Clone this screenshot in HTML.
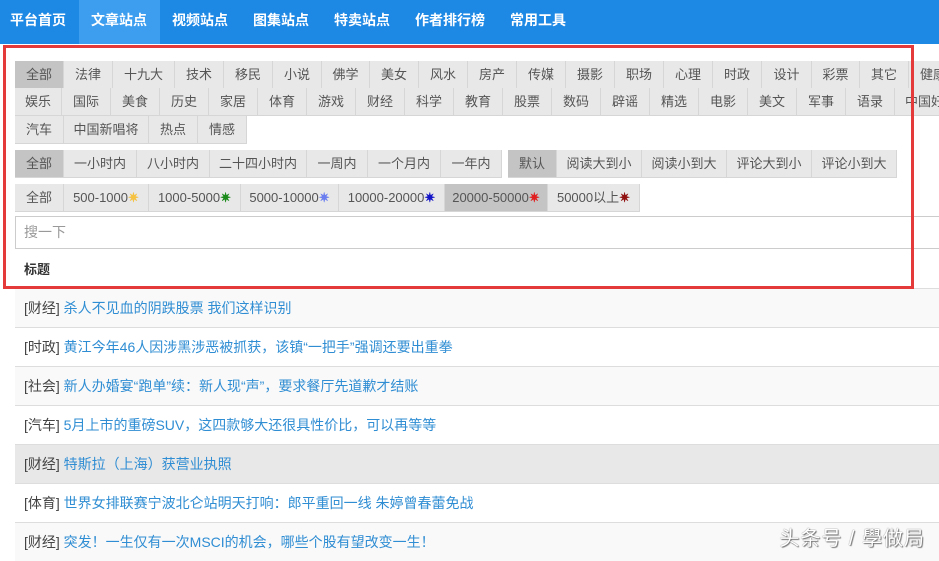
<!DOCTYPE html>
<html><head><meta charset="utf-8"><style>
*{box-sizing:border-box;margin:0;padding:0}
body{width:939px;height:553px;overflow:hidden;background:#fff;font-family:"Liberation Sans","Noto Sans CJK SC",sans-serif;font-size:13px;color:#333;position:relative}
.nav{position:absolute;left:0;top:0;width:939px;height:44px;background:#1e88e5;display:flex}
.nav div{color:#fff;font-size:14px;font-weight:bold;line-height:40px;padding:0 12.5px}
.nav div:first-child{padding-left:10px}
.nav div.on{background:#3d9ef0}
.row{position:absolute;left:15px;display:flex;white-space:nowrap}
.row span{display:block;height:28px;line-height:27px;background:#e8e8e8;border-right:1px solid #d6d6d6;border-bottom:1px solid #d6d6d6;color:#555;text-align:center;font-size:13px}
.row span.on{background:#c4c4c4}
.red{position:absolute;left:3px;top:45px;width:911px;height:244px;border:3px solid #e53a3a;z-index:5}
.search{position:absolute;left:15px;top:216px;width:924px;height:33px;border:1px solid #ccc;border-right:none;color:#999;font-size:14px;line-height:31px;padding-left:8px}
.hd{position:absolute;left:24px;top:259px;font-weight:bold;font-size:13px;color:#333}
.li{position:absolute;left:15px;width:924px;height:39px;border-top:1px solid #ddd;line-height:38px;padding-left:9px;font-size:14px;color:#444}
.li a{color:#2f8dd3;text-decoration:none}
.wm{position:absolute;right:14px;top:522px;font-size:20px;color:#fff;text-shadow:0 0 1px #555,1px 1px 1px #777;letter-spacing:1px}
</style></head><body>
<div class="nav"><div>平台首页</div><div class="on">文章站点</div><div>视频站点</div><div>图集站点</div><div>特卖站点</div><div>作者排行榜</div><div>常用工具</div></div>
<div class="red"></div>
<div class="row" style="top:61px"><span class="on" style="width:49px">全部</span><span style="width:49px">法律</span><span style="width:62px">十九大</span><span style="width:49px">技术</span><span style="width:49px">移民</span><span style="width:49px">小说</span><span style="width:48px">佛学</span><span style="width:49px">美女</span><span style="width:49px">风水</span><span style="width:49px">房产</span><span style="width:49px">传媒</span><span style="width:49px">摄影</span><span style="width:49px">职场</span><span style="width:49px">心理</span><span style="width:49px">时政</span><span style="width:50px">设计</span><span style="width:48px">彩票</span><span style="width:49px">其它</span><span style="width:49px">健康</span></div>
<div class="row" style="top:88px"><span style="width:47px">娱乐</span><span style="width:49px">国际</span><span style="width:49px">美食</span><span style="width:49px">历史</span><span style="width:49px">家居</span><span style="width:49px">体育</span><span style="width:49px">游戏</span><span style="width:49px">财经</span><span style="width:49px">科学</span><span style="width:49px">教育</span><span style="width:49px">股票</span><span style="width:49px">数码</span><span style="width:49px">辟谣</span><span style="width:49px">精选</span><span style="width:49px">电影</span><span style="width:49px">美文</span><span style="width:49px">军事</span><span style="width:49px">语录</span><span style="width:60px">中国好</span></div>
<div class="row" style="top:116px"><span style="width:49px">汽车</span><span style="width:85px">中国新唱将</span><span style="width:49px">热点</span><span style="width:49px">情感</span></div>
<div class="row" style="top:150px"><span class="on" style="width:49px">全部</span><span style="width:73px">一小时内</span><span style="width:73px">八小时内</span><span style="width:97px">二十四小时内</span><span style="width:61px">一周内</span><span style="width:73px">一个月内</span><span style="width:61px">一年内</span><span style="width:6px;background:#fff;border:none"></span><span class="on" style="width:49px">默认</span><span style="width:85px">阅读大到小</span><span style="width:85px">阅读小到大</span><span style="width:85px">评论大到小</span><span style="width:85px">评论小到大</span></div>
<div class="row" style="top:184px"><span style="width:49px">全部</span><span style="width:85px">500-1000<b style="color:#f5c242">✷</b></span><span style="width:92px">1000-5000<b style="color:#1a8a1a">✷</b></span><span style="width:98px">5000-10000<b style="color:#6a7ef0">✷</b></span><span style="width:106px">10000-20000<b style="color:#1515c8">✷</b></span><span class="on" style="width:103px">20000-50000<b style="color:#e02020">✷</b></span><span style="width:92px">50000以上<b style="color:#901010">✷</b></span></div>
<div class="search">搜一下</div>
<div class="hd">标题</div>
<div class="li" style="top:288px;background:#f9f9f9">[财经] <a>杀人不见血的阴跌股票 我们这样识别</a></div>
<div class="li" style="top:327px">[时政] <a>黄江今年46人因涉黑涉恶被抓获，该镇“一把手”强调还要出重拳</a></div>
<div class="li" style="top:366px;background:#f9f9f9">[社会] <a>新人办婚宴“跑单”续：新人现“声”，要求餐厅先道歉才结账</a></div>
<div class="li" style="top:405px">[汽车] <a>5月上市的重磅SUV，这四款够大还很具性价比，可以再等等</a></div>
<div class="li" style="top:444px;background:#e8e8e8">[财经] <a>特斯拉（上海）获营业执照</a></div>
<div class="li" style="top:483px">[体育] <a>世界女排联赛宁波北仑站明天打响：郎平重回一线 朱婷曾春蕾免战</a></div>
<div class="li" style="top:522px;background:#f9f9f9">[财经] <a>突发！一生仅有一次MSCI的机会，哪些个股有望改变一生！</a></div>
<div class="wm">头条号 / 學做局</div>
</body></html>
